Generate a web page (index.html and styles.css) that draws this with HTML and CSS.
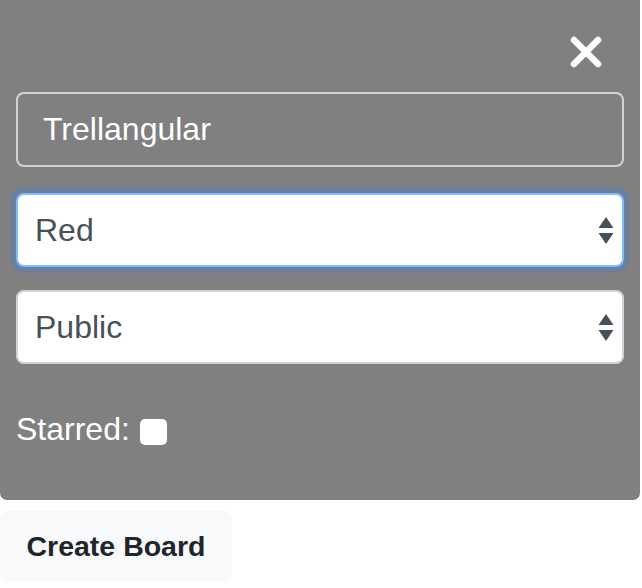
FILE: index.html
```html
<!DOCTYPE html>
<html>
<head>
<meta charset="utf-8">
<link rel="stylesheet" href="styles.css">
</head>
<body>
<div class="panel">
  <div class="close-row">
    <svg class="close" width="32" height="32" viewBox="0 0 32 32"><path d="M4 4 L28 28 M28 4 L4 28" stroke="#fff" stroke-width="6.5" stroke-linecap="round"/></svg>
  </div>
  <div class="field text-field">Trellangular</div>
  <div class="select-wrap focused">
    <div class="field select">Red</div>
    <svg class="arrows" width="16" height="28" viewBox="0 0 16 28"><path d="M8 0 L15.5 11 L0.5 11 Z M0.5 16 L15.5 16 L8 27 Z" fill="#495057"/></svg>
  </div>
  <div class="select-wrap">
    <div class="field select">Public</div>
    <svg class="arrows" width="16" height="28" viewBox="0 0 16 28"><path d="M8 0 L15.5 11 L0.5 11 Z M0.5 16 L15.5 16 L8 27 Z" fill="#495057"/></svg>
  </div>
  <div class="starred"><span>Starred:</span><span class="check"></span></div>
</div>
<div class="btn">Create Board</div>
</body>
</html>
```
FILE: styles.css
```css
html, body { margin: 0; padding: 0; background: #fff; }
body { font-family: "Liberation Sans", Arial, sans-serif; width: 640px; }
.panel {
  background: #808080;
  border-radius: 0 0 7px 7px;
  padding: 36px 16px 51px;
  display: flex;
  flex-direction: column;
}
.close-row { display: flex; justify-content: flex-end; padding-right: 22px; margin-bottom: 24px; }
.close { display: block; }
.field {
  box-sizing: border-box;
  height: 75px;
  border-radius: 8px;
  font-size: 32px;
  display: flex;
  align-items: center;
}
.text-field {
  border: 2px solid #cfd2d6;
  color: #fff;
  padding-left: 25px;
  margin-bottom: 26px;
}
.select-wrap { position: relative; margin-bottom: 23px; }
.select {
  background: #fff;
  border: 2px solid #ced4da;
  color: #495057;
  padding-left: 17px;
  height: 74px;
}
.focused .select { border-color: #80bdff; box-shadow: 0 0 0 6px #6c809e; }
.arrows { position: absolute; right: 10px; top: 24px; }
.starred {
  display: flex;
  align-items: center;
  color: #fff;
  font-size: 32px;
  margin-top: 22px;
  height: 40px;
}
.check {
  display: inline-block;
  width: 27px;
  height: 26px;
  background: #fff;
  border-radius: 5px;
  margin-left: 10px;
  margin-top: 6px;
}
.btn {
  margin-top: 11px;
  width: 232px;
  height: 70px;
  box-sizing: border-box;
  background: #f8f9fa;
  border-radius: 8px;
  color: #212529;
  font-weight: bold;
  font-size: 28.5px;
  display: flex;
  align-items: center;
  justify-content: center;
}
```
